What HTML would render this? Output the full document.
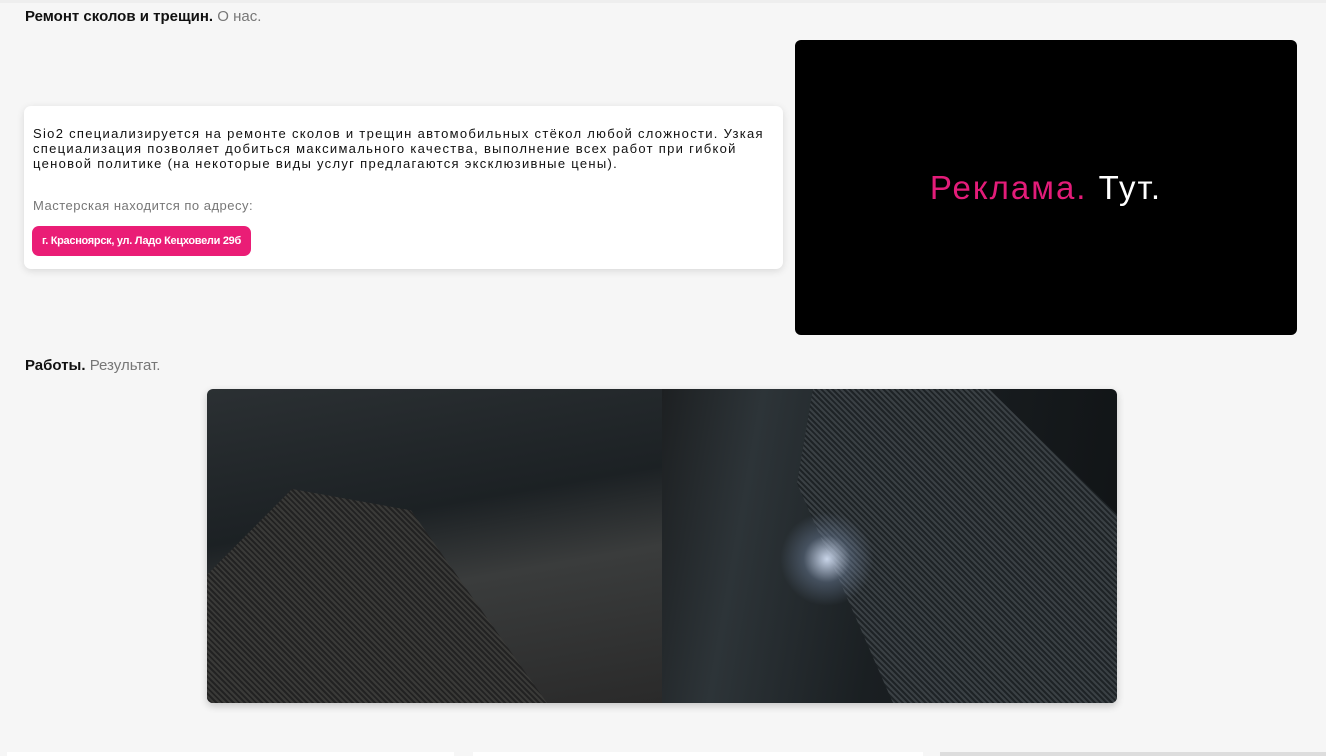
<!DOCTYPE html>
<html><head><meta charset="utf-8"><style>
body{margin:0;width:1326px;height:756px;background:#f6f6f6;font-family:"Liberation Sans",sans-serif;position:relative;overflow:hidden}
.h{position:absolute;font-size:15px;font-weight:bold;color:#111}
.h span{font-weight:normal;color:#777}
.card{position:absolute;left:24px;top:106px;width:759px;height:163px;background:#fff;border-radius:7px;box-shadow:0 2px 8px rgba(0,0,0,.12)}
.card p{margin:0;position:absolute;left:9px;font-size:13px;line-height:15px;color:#111;white-space:nowrap}
.btn{position:absolute;left:8px;top:120px;width:219px;height:30px;background:#ea1d76;border-radius:7px;color:#fff;font-size:11px;font-weight:bold;line-height:30px;text-align:center;letter-spacing:-0.3px}
.ad{position:absolute;left:795px;top:40px;width:502px;height:295px;background:#000;border-radius:6px;color:#fff;font-size:33px;text-align:center;line-height:295px;letter-spacing:2px}
.ph{position:absolute;left:207px;top:389px;width:910px;height:314px;border-radius:6px;overflow:hidden;box-shadow:0 3px 8px rgba(0,0,0,.2)}
</style></head><body>
<div style="position:absolute;left:0;top:0;width:1326px;height:3px;background:#eee"></div>
<div class="h" style="left:25px;top:8px">Ремонт сколов и трещин. <span>О нас.</span></div>
<div class="card">
<p style="top:20px;letter-spacing:1.3px">Sio2 специализируется на ремонте сколов и трещин автомобильных стёкол любой сложности. Узкая<br>специализация позволяет добиться максимального качества, выполнение всех работ при гибкой<br>ценовой политике (на некоторые виды услуг предлагаются эксклюзивные цены).</p>
<p style="top:92px;color:#777;letter-spacing:0.5px">Мастерская находится по адресу:</p>
<div class="btn">г. Красноярск, ул. Ладо Кецховели 29б</div>
</div>
<div class="ad"><span style="color:#e31c79">Реклама.</span> Тут.</div>
<div class="h" style="left:25px;top:357px">Работы. <span>Результат.</span></div>
<div class="ph">
<div style="position:absolute;left:0;top:0;width:455px;height:314px;background:linear-gradient(170deg,#2b3033 0%,#1c2124 40%,#3a3c3c 60%,#2a2a2a 100%)"></div>
<div style="position:absolute;left:0;top:100px;width:340px;height:214px;background:repeating-linear-gradient(45deg,#3a3a38 0 2px,#222 2px 4px);clip-path:polygon(0 40%,25% 0,60% 10%,100% 100%,0 100%)"></div>
<div style="position:absolute;left:455px;top:0;width:455px;height:314px;background:linear-gradient(100deg,#1d2022 0%,#2d3438 20%,#1a1f22 50%,#101315 100%)"></div>
<div style="position:absolute;left:590px;top:0;width:320px;height:314px;background:repeating-linear-gradient(45deg,#3a4044 0 2px,#1e2326 2px 4px);clip-path:polygon(5% 0,60% 0,100% 40%,100% 100%,30% 100%,0 30%)"></div>
<div style="position:absolute;left:560px;top:120px;width:120px;height:100px;background:radial-gradient(circle,#c8d4e8 0%,rgba(120,140,170,.4) 30%,transparent 60%)"></div>
</div>
<div style="position:absolute;left:7px;top:752px;width:447px;height:4px;background:#fff"></div>
<div style="position:absolute;left:473px;top:752px;width:450px;height:4px;background:#fff"></div>
<div style="position:absolute;left:940px;top:752px;width:386px;height:4px;background:#ddd"></div>
</body></html>
